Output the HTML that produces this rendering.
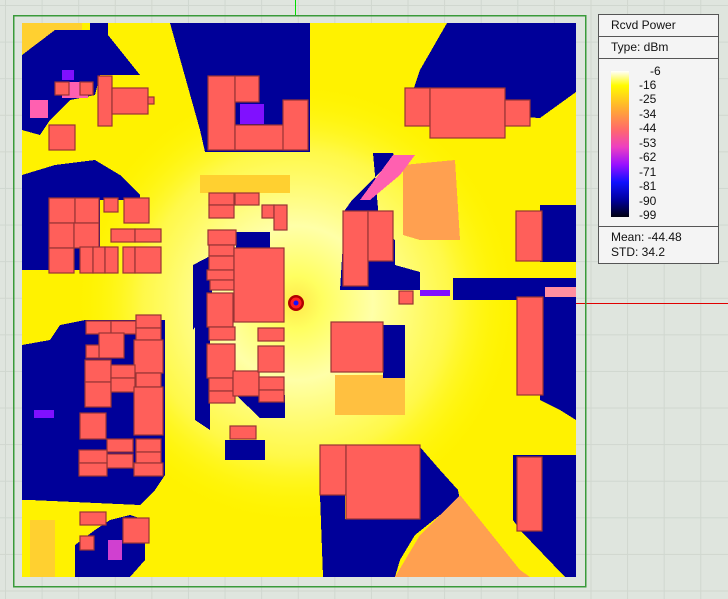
<!DOCTYPE html>
<html><head><style>
html,body{margin:0;padding:0;}
body{width:728px;height:599px;overflow:hidden;background:#dfe5de;position:relative;font-family:"Liberation Sans",sans-serif;}
.grid{position:absolute;left:0;top:0;width:728px;height:599px;background-image:linear-gradient(#d0d7cf 1px,transparent 1px),linear-gradient(90deg,#d0d7cf 1px,transparent 1px);background-size:36.6px 36.6px;background-position:5px 5px;}
.leg{position:absolute;left:598px;top:14px;width:119px;height:248px;background:#f4f4f4;border:1px solid #555;font-size:12px;color:#111;}
.leg .r{border-bottom:1px solid #555;height:21px;line-height:21px;padding-left:12px;}
.bar{position:absolute;left:12px;top:56px;width:18px;height:146px;background:linear-gradient(#ffffff,#fffb00 10%,#ffb030 25%,#ff6a6a 40%,#ee40c0 52%,#9a10ff 64%,#1010ff 76%,#0000a0 88%,#000010);}
.lab{position:absolute;left:40px;font-size:12px;line-height:12px;}
</style></head><body>
<div class="grid"></div>
<svg width="728" height="599" style="position:absolute;left:0;top:0" shape-rendering="crispEdges">
<rect x="295" y="0" width="1" height="15" fill="#00dd00"/>
<rect x="576" y="303" width="152" height="1" fill="#e00000"/>
<rect x="13.5" y="15.5" width="572" height="571" fill="none" stroke="#3a9a3a" stroke-width="1.5"/>
<defs><radialGradient id="g" cx="296" cy="303" r="220" gradientUnits="userSpaceOnUse"><stop offset="0" stop-color="#ffe84a"/><stop offset="0.12" stop-color="#ffff60"/><stop offset="0.35" stop-color="#ffffa8"/><stop offset="0.7" stop-color="#ffff90" stop-opacity="0.5"/><stop offset="1" stop-color="#ffff00" stop-opacity="0"/></radialGradient></defs>
<rect x="22" y="23" width="554" height="554" fill="#fff200"/>
<rect x="22" y="23" width="554" height="554" fill="url(#g)"/>
<g fill="#ffd030">
<rect x="22" y="23" width="60" height="30"/><rect x="22" y="380" width="13" height="60"/><rect x="30" y="520" width="25" height="57"/><rect x="200" y="175" width="90" height="18"/>
<rect x="335" y="375" width="70" height="40" fill="#ffc040"/>
</g>
<g fill="#000099">
<polygon points="22,55 55,30 90,30 90,23 108,23 108,35 140,75 100,75 95,95 70,100 50,120 40,135 22,130"/>
<polygon points="22,175 55,165 95,160 120,175 140,195 140,200 100,200 100,270 22,270"/>
<polygon points="170,23 310,23 310,152 205,152 200,130"/>
<polygon points="447,23 576,23 576,92 540,118 430,112 410,100 420,70"/>
<polygon points="373,153 393,153 398,165 380,172 352,200 345,210 340,290 420,290 420,272 395,265 395,240 380,230"/>
<polygon points="540,205 576,205 576,262 540,262"/>
<polygon points="453,278 576,278 576,300 453,300"/>
<polygon points="540,297 576,297 576,420 560,410 540,400"/>
<polygon points="383,325 405,325 405,378 383,378"/>
<polygon points="320,495 345,495 345,519 420,519 420,447 440,470 458,490 460,500 440,515 415,535 400,560 395,577 323,577"/>
<polygon points="513,455 576,455 576,577 565,577 520,530 513,520"/>
<polygon points="22,345 50,340 60,325 85,320 165,320 165,475 155,490 145,500 140,505 30,500 22,500"/>
<polygon points="75,577 75,545 95,530 110,520 130,515 145,520 145,560 130,577"/>
<polygon points="193,265 212,255 212,300 200,320 193,330"/>
<polygon points="195,295 210,290 210,430 195,420"/>
<polygon points="225,440 265,440 265,460 225,460"/>
<polygon points="236,232 270,232 270,250 236,250"/>
<polygon points="236,395 285,395 285,418 260,418"/>
</g>
<g fill="#ffa050">
<polygon points="403,165 455,160 460,240 420,240 403,235"/>
<polygon points="460,495 520,570 530,577 395,577 420,535"/>
</g>
<g fill="#ff60b0">
<polygon points="393,155 415,155 400,175 370,200 360,200"/>
<rect x="30" y="100" width="18" height="18"/><rect x="62" y="82" width="26" height="16"/>
<rect x="30" y="255" width="0" height="0"/>
<rect x="108" y="540" width="14" height="20" fill="#d040d0"/>
<rect x="545" y="287" width="31" height="10" fill="#ff8fa0"/>
</g>
<g fill="#8010ff"><rect x="240" y="104" width="24" height="20"/><rect x="62" y="70" width="12" height="10"/><rect x="34" y="410" width="20" height="8"/><rect x="420" y="290" width="30" height="6"/></g>
<g fill="#ff5f5a" stroke="#983434" stroke-width="1.2" shape-rendering="auto">
<rect x="55" y="82" width="14" height="13"/><rect x="80" y="82" width="13" height="13"/><rect x="98" y="76" width="14" height="50"/><rect x="112" y="88" width="36" height="26"/><rect x="148" y="97" width="6" height="7"/><rect x="49" y="125" width="26" height="25"/>
<rect x="208" y="76" width="27" height="74"/><rect x="235" y="76" width="24" height="26"/><rect x="235" y="125" width="55" height="25"/><rect x="283" y="100" width="25" height="50"/>
<rect x="209" y="193" width="25" height="12"/><rect x="209" y="205" width="25" height="13"/><rect x="235" y="193" width="24" height="12"/><rect x="262" y="205" width="12" height="13"/><rect x="274" y="205" width="13" height="25"/>
<rect x="208" y="230" width="28" height="15"/><rect x="209" y="245" width="25" height="11"/><rect x="209" y="256" width="25" height="14"/><rect x="207" y="270" width="27" height="10"/><rect x="210" y="280" width="24" height="10"/><rect x="207" y="293" width="26" height="34"/><rect x="234" y="248" width="50" height="74"/>
<rect x="49" y="198" width="26" height="25"/><rect x="75" y="198" width="24" height="25"/><rect x="49" y="223" width="25" height="25"/><rect x="74" y="223" width="25" height="25"/><rect x="49" y="248" width="25" height="25"/><rect x="104" y="198" width="14" height="14"/><rect x="124" y="198" width="25" height="25"/><rect x="111" y="229" width="24" height="13"/><rect x="135" y="229" width="26" height="13"/>
<rect x="80" y="247" width="13" height="26"/><rect x="93" y="247" width="12" height="26"/><rect x="105" y="247" width="13" height="26"/><rect x="123" y="247" width="12" height="26"/><rect x="135" y="247" width="26" height="26"/>
<rect x="405" y="88" width="25" height="38"/><rect x="430" y="88" width="75" height="50"/><rect x="505" y="100" width="25" height="26"/>
<rect x="343" y="211" width="25" height="75"/><rect x="368" y="211" width="25" height="50"/><rect x="516" y="211" width="26" height="50"/>
<rect x="399" y="291" width="14" height="13"/><rect x="517" y="297" width="26" height="98"/>
<rect x="331" y="322" width="52" height="50"/><rect x="320" y="445" width="26" height="50"/><rect x="346" y="445" width="74" height="74"/><rect x="517" y="457" width="25" height="74"/>
<rect x="86" y="321" width="25" height="13"/><rect x="111" y="321" width="25" height="13"/><rect x="136" y="315" width="25" height="13"/><rect x="136" y="328" width="25" height="12"/><rect x="99" y="333" width="25" height="25"/><rect x="86" y="345" width="13" height="13"/><rect x="134" y="340" width="29" height="33"/>
<rect x="85" y="360" width="26" height="22"/><rect x="85" y="382" width="26" height="25"/><rect x="111" y="365" width="24" height="13"/><rect x="111" y="378" width="24" height="14"/><rect x="136" y="373" width="25" height="14"/><rect x="134" y="387" width="29" height="48"/>
<rect x="80" y="413" width="26" height="26"/><rect x="107" y="439" width="26" height="13"/><rect x="107" y="454" width="26" height="14"/><rect x="79" y="450" width="28" height="13"/><rect x="79" y="463" width="28" height="13"/><rect x="136" y="439" width="25" height="13"/><rect x="136" y="452" width="25" height="11"/><rect x="134" y="463" width="29" height="13"/>
<rect x="80" y="512" width="26" height="13"/><rect x="80" y="536" width="14" height="14"/><rect x="123" y="518" width="26" height="25"/>
<rect x="209" y="327" width="26" height="13"/><rect x="207" y="344" width="28" height="34"/><rect x="209" y="378" width="24" height="13"/><rect x="209" y="391" width="26" height="12"/><rect x="233" y="371" width="26" height="25"/><rect x="258" y="328" width="26" height="13"/><rect x="258" y="346" width="26" height="26"/><rect x="259" y="377" width="25" height="13"/><rect x="259" y="390" width="25" height="12"/><rect x="230" y="426" width="26" height="13"/>
</g>
<g shape-rendering="auto"><circle cx="296" cy="303" r="8" fill="#b00000"/><circle cx="296" cy="303" r="5.5" fill="#ff2020"/><circle cx="296" cy="303" r="2.5" fill="#1010ff"/></g>
</svg>
<div class="leg">
<div class="r">Rcvd Power</div>
<div class="r">Type: dBm</div>
<div class="bar"></div>
<div class="lab" style="top:50px;left:51px">-6</div>
<div class="lab" style="top:64px">-16</div>
<div class="lab" style="top:78px">-25</div>
<div class="lab" style="top:93px">-34</div>
<div class="lab" style="top:107px">-44</div>
<div class="lab" style="top:122px">-53</div>
<div class="lab" style="top:136px">-62</div>
<div class="lab" style="top:151px">-71</div>
<div class="lab" style="top:165px">-81</div>
<div class="lab" style="top:180px">-90</div>
<div class="lab" style="top:194px">-99</div>
<div style="position:absolute;left:0;top:211px;width:119px;border-top:1px solid #555"></div>
<div class="lab" style="top:216px;left:12px">Mean: -44.48</div>
<div class="lab" style="top:231px;left:12px">STD: 34.2</div>
</div>
</body></html>
